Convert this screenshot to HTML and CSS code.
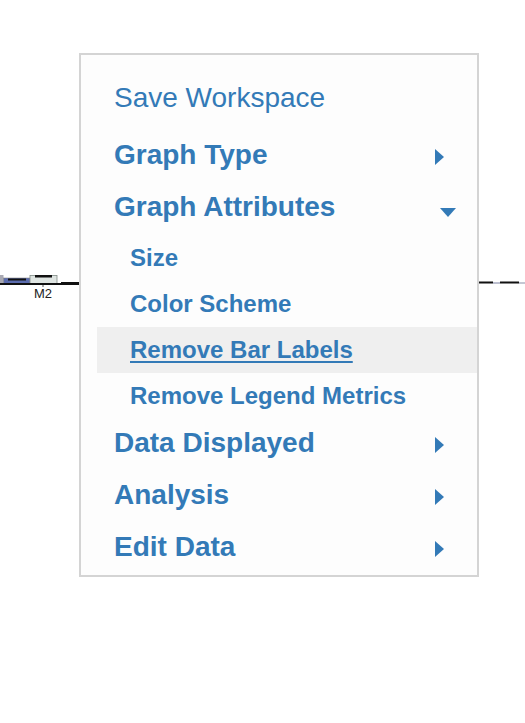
FILE: index.html
```html
<!DOCTYPE html>
<html lang="en">
<head>
<meta charset="utf-8">
<title>Graph menu</title>
<link rel="stylesheet" href="styles.css">
</head>
<body>
<div class="canvas">
  <svg class="chart" width="525" height="723" viewBox="0 0 525 723" xmlns="http://www.w3.org/2000/svg">
    <rect x="0" y="275" width="3.5" height="9" fill="#a9a9b3"/>
    <rect x="3.5" y="278" width="26.5" height="6" fill="#5b6cae" stroke="#888" stroke-width="0.6"/>
    <rect x="8" y="278.5" width="18" height="2" fill="#111"/>
    <rect x="30" y="275.5" width="27" height="8.5" fill="#dfe5e2" stroke="#7f8a86" stroke-width="0.8"/>
    <rect x="35" y="275" width="17" height="2.5" fill="#111"/>
    <rect x="61" y="282" width="18" height="2" fill="#111"/>
    <rect x="0" y="283" width="80" height="2" fill="#111"/>
    <rect x="42.5" y="285" width="1" height="2" fill="#555"/>
    <text x="43" y="298" class="tick-label" text-anchor="middle">M2</text>
    <rect x="479" y="281.5" width="14" height="2" fill="#111"/>
    <rect x="493" y="282.5" width="7" height="1" fill="#7a80a0"/>
    <rect x="500" y="281.5" width="19" height="2" fill="#111"/>
    <rect x="519" y="282.5" width="6" height="1" fill="#8a8fa8"/>
  </svg>

  <nav class="menu">
    <div class="item save">Save Workspace</div>
    <div class="item main"><span>Graph Type</span><i class="arrow-right"></i></div>
    <div class="item main"><span>Graph Attributes</span><i class="arrow-down"></i></div>
    <div class="item sub">Size</div>
    <div class="item sub">Color Scheme</div>
    <div class="item sub active"><span class="link">Remove Bar Labels</span></div>
    <div class="item sub">Remove Legend Metrics</div>
    <div class="item main"><span>Data Displayed</span><i class="arrow-right"></i></div>
    <div class="item main"><span>Analysis</span><i class="arrow-right"></i></div>
    <div class="item main"><span>Edit Data</span><i class="arrow-right"></i></div>
  </nav>
</div>
</body>
</html>
```
FILE: styles.css
```css
html, body {
  margin: 0;
  padding: 0;
  background: #ffffff;
}

body {
  font-family: "Liberation Sans", Arial, sans-serif;
}

.canvas {
  position: relative;
  width: 525px;
  height: 723px;
  overflow: hidden;
}

.chart {
  display: block;
}

.tick-label {
  font-family: "Liberation Sans", Arial, sans-serif;
  font-size: 13px;
  fill: #222;
}

.menu {
  position: absolute;
  left: 79px;
  top: 53px;
  width: 400px;
  box-sizing: border-box;
  border: 2px solid #d4d4d4;
  background: #fdfdfd;
  padding: 19px 0 0 16px;
  color: #337ab7;
}

.item {
  display: flex;
  justify-content: space-between;
  align-items: flex-start;
  white-space: nowrap;
}

.save {
  font-size: 28px;
  font-weight: normal;
  line-height: 32px;
  padding: 8px 0 17px 17px;
}

.main {
  font-size: 28px;
  font-weight: bold;
  line-height: 32px;
  padding: 8px 0 12px 17px;
}

.sub {
  font-size: 24px;
  font-weight: bold;
  line-height: 28px;
  padding: 9px 0 9px 33px;
}

.active {
  background: #efefef;
}

.link {
  text-decoration: underline;
  text-underline-offset: 3px;
}

.arrow-right {
  display: block;
  width: 0;
  height: 0;
  margin: 10px 33px 0 0;
  border-left: 9px solid #337ab7;
  border-top: 8px solid transparent;
  border-bottom: 8px solid transparent;
}

.arrow-down {
  display: block;
  width: 0;
  height: 0;
  margin: 17px 21px 0 0;
  border-top: 9px solid #337ab7;
  border-left: 8px solid transparent;
  border-right: 8px solid transparent;
}
```
